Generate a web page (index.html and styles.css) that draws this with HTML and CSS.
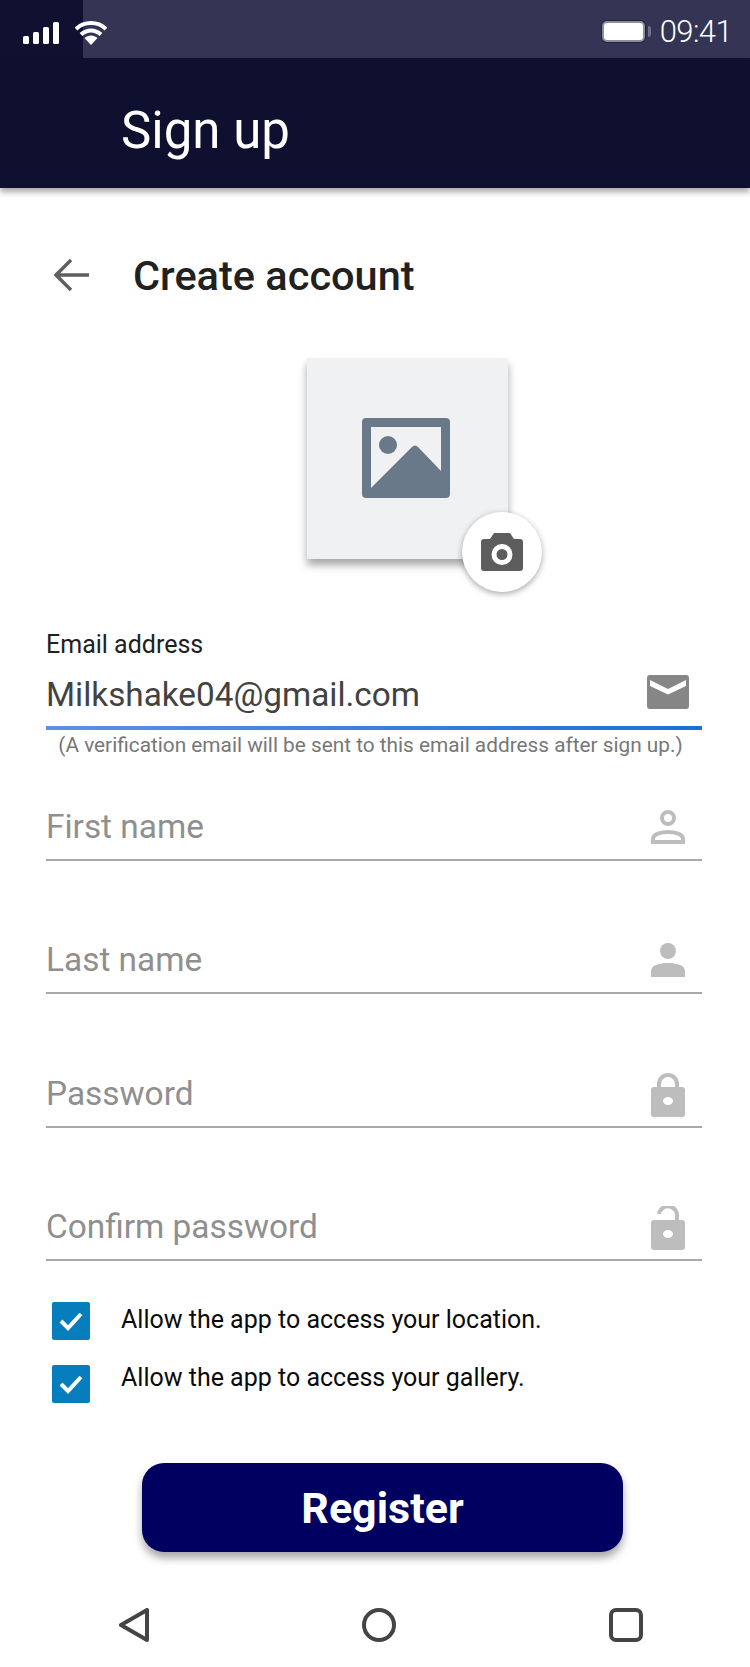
FILE: index.html
```html
<!DOCTYPE html>
<html lang="en">
<head>
  <meta charset="UTF-8">
  <title>Sign up</title>
  <link rel="stylesheet" href="styles.css">
</head>
<body>
  <div class="status-bar">
    <div class="status-left">
      <svg class="signal" width="36" height="22" viewBox="0 0 36 22"><rect x="0" y="14" width="6" height="8" rx="1.5"/><rect x="10" y="10" width="6" height="12" rx="1.5"/><rect x="20" y="5" width="6" height="17" rx="1.5"/><rect x="30" y="0" width="6" height="22" rx="1.5"/></svg>
      <svg class="wifi" width="32" height="24" viewBox="0 0 32 24"><path d="M1 8C9 0 23 0 31 8" fill="none" stroke="#fff" stroke-width="4"/><path d="M6 13.500C12 8 20 8 26 13.500" fill="none" stroke="#fff" stroke-width="4"/><path d="M9.500 17C13 13.500 19 13.500 22.500 17L16 24Z" fill="#fff"/></svg>
    </div>
    <div class="status-right">
      <div class="battery"></div>
      <span class="clock">09:41</span>
    </div>
  </div>

  <header class="app-bar">Sign up</header>

  <main class="content">
    <div class="title-row">
      <svg class="back-arrow" width="36" height="34" viewBox="0 0 36 34"><path d="M35 17H3M17 2L2 17l15 15" fill="none" stroke="#5f5f5f" stroke-width="3.500"/></svg>
      <h1>Create account</h1>
    </div>

    <div class="photo">
      <svg width="88" height="80" viewBox="0 0 88 80"><path fill="#697989" fill-rule="evenodd" d="M4 0h80a4 4 0 0 1 4 4v72a4 4 0 0 1-4 4H4a4 4 0 0 1-4-4V4a4 4 0 0 1 4-4zM9 9v61l41-41c2-2 4-2 6 0l23 24V9z"/><circle cx="26" cy="27" r="9" fill="#697989"/></svg>
      <div class="camera-badge">
        <svg width="42" height="38" viewBox="0 0 42 38"><path fill="#5d5d5d" fill-rule="evenodd" d="M13 0h16l4 6h6a3 3 0 0 1 3 3v26a3 3 0 0 1-3 3H3a3 3 0 0 1-3-3V9a3 3 0 0 1 3-3h6zM21 11a10.500 10.500 0 1 0 0 21 10.500 10.500 0 0 0 0-21zM21 16a5.500 5.500 0 1 1 0 11 5.500 5.500 0 0 1 0-11z"/></svg>
      </div>
    </div>

    <label class="email-label">Email address</label>
    <div class="field field-active">
      <span class="value">Milkshake04@gmail.com</span>
      <svg class="field-icon" width="42" height="34" viewBox="0 0 42 34"><path fill="#868686" fill-rule="evenodd" d="M3 0h36a3 3 0 0 1 3 3v28a3 3 0 0 1-3 3H3a3 3 0 0 1-3-3V3a3 3 0 0 1 3-3zM3 5l18 9 18-9v6l-18 8.500L3 11z"/></svg>
    </div>
    <p class="hint">(A verification email will be sent to this email address after sign up.)</p>

    <div class="field field-first">
      <span class="placeholder">First name</span>
      <svg class="field-icon" width="34" height="34" viewBox="0 0 34 34"><g fill="none" stroke="#bdbdbd" stroke-width="4"><circle cx="17" cy="8" r="6"/><path d="M2 32v-3c0-5 8-7 15-7s15 2 15 7v3z"/></g></svg>
    </div>
    <div class="field">
      <span class="placeholder">Last name</span>
      <svg class="field-icon" width="34" height="34" viewBox="0 0 34 34"><circle cx="17" cy="8" r="8" fill="#bdbdbd"/><path fill="#bdbdbd" d="M0 34v-6c0-6 9-8 17-8s17 2 17 8v6z"/></svg>
    </div>
    <div class="field">
      <span class="placeholder">Password</span>
      <svg class="field-icon lock" width="34" height="44" viewBox="0 0 34 44"><path fill="none" stroke="#bdbdbd" stroke-width="4" d="M8 17V11a9 9 0 0 1 18 0v6"/><path fill="#bdbdbd" fill-rule="evenodd" d="M3 14h28a3 3 0 0 1 3 3v24a3 3 0 0 1-3 3H3a3 3 0 0 1-3-3V17a3 3 0 0 1 3-3zM17 24a5 4 0 1 0 0 8 5 4 0 0 0 0-8z"/></svg>
    </div>
    <div class="field">
      <span class="placeholder">Confirm password</span>
      <svg class="field-icon lock" width="34" height="44" viewBox="0 0 34 44"><path fill="none" stroke="#bdbdbd" stroke-width="4" d="M8 8a9 9 0 0 1 18 3v6"/><path fill="#bdbdbd" fill-rule="evenodd" d="M3 14h28a3 3 0 0 1 3 3v24a3 3 0 0 1-3 3H3a3 3 0 0 1-3-3V17a3 3 0 0 1 3-3zM17 24a5 4 0 1 0 0 8 5 4 0 0 0 0-8z"/></svg>
    </div>

    <div class="check-row">
      <div class="checkbox"><svg width="24" height="20" viewBox="0 0 24 20"><path d="M2 10l7 7L22 3" fill="none" stroke="#fff" stroke-width="4"/></svg></div>
      <span>Allow the app to access your location.</span>
    </div>
    <div class="check-row check-row-second">
      <div class="checkbox"><svg width="24" height="20" viewBox="0 0 24 20"><path d="M2 10l7 7L22 3" fill="none" stroke="#fff" stroke-width="4"/></svg></div>
      <span>Allow the app to access your gallery.</span>
    </div>

    <button class="register">Register</button>
  </main>

  <nav class="nav-bar">
    <svg width="30" height="34" viewBox="0 0 30 34"><path d="M28 2v30L2 17z" fill="none" stroke="#444" stroke-width="4" stroke-linejoin="round"/></svg>
    <svg width="34" height="34" viewBox="0 0 34 34"><circle cx="17" cy="17" r="15" fill="none" stroke="#444" stroke-width="4"/></svg>
    <svg width="34" height="34" viewBox="0 0 34 34"><rect x="2" y="2" width="30" height="30" rx="5" fill="none" stroke="#444" stroke-width="4"/></svg>
  </nav>
</body>
</html>
```

FILE: styles.css
```css
* {
  box-sizing: border-box;
}
body {
  margin: 0;
  width: 750px;
  height: 1667px;
  overflow: hidden;
  background: #fff;
  font-family: Roboto, Arial, sans-serif;
}
svg {
  display: block;
  flex-shrink: 0;
}
.status-bar {
  display: flex;
  justify-content: space-between;
  align-items: stretch;
  height: 58px;
  background: #343554;
}
.status-left {
  display: flex;
  align-items: center;
  gap: 16px;
  width: 83px;
  padding: 8px 0 0 23px;
  background: #101030;
}
.signal {
  fill: #fff;
}
.status-right {
  display: flex;
  align-items: center;
  gap: 15px;
  padding: 5px 18px 0 0;
}
.battery {
  position: relative;
  width: 43px;
  height: 21px;
  background: #fff;
  border: 2px solid #8c8da0;
  border-radius: 5px;
  box-shadow: 0 0 0 1px #22233f;
}
.battery::after {
  content: "";
  position: absolute;
  top: 3px;
  right: -8px;
  width: 3px;
  height: 11px;
  background: #6f7088;
  border-radius: 0 3px 3px 0;
}
.clock {
  font-size: 31px;
  font-weight: 300;
  letter-spacing: -0.6px;
  color: #fff;
}
.app-bar {
  position: relative;
  height: 130px;
  padding: 40px 0 0 121px;
  background: #0f0f30;
  color: #fff;
  font-size: 51px;
  line-height: 66px;
  box-shadow: 0 4px 6px rgba(0,0,0,0.35);
}
.content {
  padding: 0 48px 0 46px;
}
.title-row {
  display: flex;
  align-items: center;
  height: 50px;
  margin-top: 62px;
  padding-left: 8px;
}
.title-row h1 {
  margin: 0 0 0 43px;
  font-size: 41.5px;
  font-weight: 500;
  color: #212121;
}
.photo {
  position: relative;
  display: flex;
  align-items: center;
  justify-content: center;
  width: 201px;
  height: 201px;
  margin: 58px 0 0 261px;
  padding: 0 4px 2px 0;
  background: #eff1f3;
  box-shadow: 0 6px 8px rgba(0,0,0,0.35);
}
.camera-badge {
  position: absolute;
  right: -34px;
  bottom: -33px;
  display: flex;
  align-items: center;
  justify-content: center;
  width: 80px;
  height: 80px;
  border-radius: 50%;
  background: #fff;
  box-shadow: 0 2px 6px rgba(0,0,0,0.35);
}
.email-label {
  display: block;
  margin-top: 71px;
  font-size: 25px;
  line-height: 30px;
  color: #212121;
}
.field {
  display: flex;
  justify-content: space-between;
  align-items: center;
  height: 133.4px;
  padding: 66px 17px 0 0;
  border-bottom: 2px solid #aaa;
}
.field-active {
  height: 70px;
  padding: 2px 13px 0 0;
  border-bottom: 4px solid;
  border-image: linear-gradient(90deg, #5f8fe2, #1a6fdc) 1;
}
.field-active svg {
  margin-bottom: 4px;
}
.field-first {
  height: 103px;
  padding-top: 36px;
}
.value {
  font-size: 33.3px;
  color: #424242;
}
.placeholder {
  font-size: 33.4px;
  color: #8f8f8f;
}
.lock {
  margin-top: 3px;
}
.hint {
  margin: 2px 0 0;
  padding-right: 7px;
  font-size: 20.8px;
  line-height: 26px;
  color: #777;
  text-align: center;
  white-space: nowrap;
}
.check-row {
  display: flex;
  align-items: center;
  height: 38px;
  margin: 41px 0 0 6px;
  font-size: 25px;
  color: #0a0a0a;
}
.check-row span {
  margin: -4px 0 0 31px;
}
.check-row-second {
  margin-top: 25px;
}
.check-row-second span {
  margin-top: -14px;
}
.checkbox {
  display: flex;
  align-items: center;
  justify-content: center;
  width: 38px;
  height: 38px;
  border-radius: 2px;
  background: #067dbd;
}
.register {
  display: block;
  width: 481px;
  height: 89px;
  margin: 60px 0 0 96px;
  border: none;
  border-radius: 22px;
  background: #000060;
  color: #fff;
  font-family: inherit;
  font-size: 43px;
  font-weight: 700;
  box-shadow: 0 6px 8px rgba(0,0,0,0.35);
}
.nav-bar {
  display: flex;
  justify-content: space-between;
  align-items: center;
  margin-top: 56px;
  padding: 0 107px 0 119px;
}
```
